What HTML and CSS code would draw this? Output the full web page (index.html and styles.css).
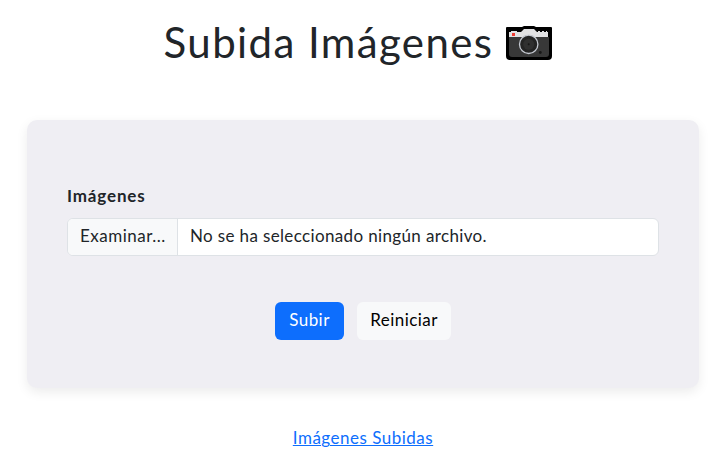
FILE: index.html
```html
<!DOCTYPE html>
<html lang="es">
<head>
<meta charset="utf-8">
<title>Subida Imágenes</title>
<link rel="stylesheet" href="styles.css">
</head>
<body>
<main class="page">
  <h1 class="title"><span class="title-text">Subida Imágenes</span>
    <svg class="camera" viewBox="0 0 46 34" aria-hidden="true">
      <path fill="#000" d="M1 1h15l2-1h10l2 1h15q1 0 1 1v28q0 4-4 4H4q-4 0-4-4V2q0-1 1-1z"/>
      <path fill="#383838" d="M3 11h40v17q0 3-3 3H6q-3 0-3-3z"/>
      <path fill="#e1e1e3" d="M3 6h2V5h6v1h4l3-3h10l3 3h1V5h2v1h2V5h2v1h2V5h1v1h1v5H3z"/>
      <path fill="#ed3b32" d="M6 7h3v3H6z"/>
      <circle cx="22.7" cy="18.3" r="9.2" fill="#242424" stroke="#c5c9d1" stroke-width="1.3"/>
      <circle cx="22.7" cy="18.3" r="5.5" fill="#303030"/>
      <circle cx="22.7" cy="18.3" r="1" fill="#171717"/>
      <circle cx="34.3" cy="26.5" r="1.4" fill="#171717"/>
    </svg>
  </h1>
  <form class="card">
    <label class="label">Imágenes</label>
    <div class="file">
      <span class="browse">Examinar...</span>
      <span class="filename">No se ha seleccionado ningún archivo.</span>
    </div>
    <div class="actions">
      <button class="btn primary" type="button">Subir</button>
      <button class="btn light" type="button">Reiniciar</button>
    </div>
  </form>
  <a class="link" href="#">Imágenes Subidas</a>
</main>
</body>
</html>
```
FILE: styles.css
```css
* { box-sizing: border-box; }
body {
  margin: 0;
  background: #fff;
  color: #212529;
  font: 400 17px/24px Lato, "Open Sans", sans-serif;
}
.page {
  display: flex;
  flex-direction: column;
  align-items: center;
  padding: 18px 28px 0 27px;
}
.title {
  display: flex;
  align-items: flex-start;
  gap: 13px;
  height: 48px;
  margin: 0 0 54px;
  padding-right: 10px;
  font-size: 42px;
  font-weight: 400;
  line-height: 49px;
  white-space: nowrap;
}
.title-text { letter-spacing: 1.4px; }
.camera { width: 46px; height: 34px; margin-top: 8px; }
.card {
  display: flex;
  flex-direction: column;
  align-self: stretch;
  height: 268px;
  padding: 64px 40px 0;
  border-radius: 10px;
  background: #efeef3;
  box-shadow: 0 4px 12px rgba(0, 0, 0, .08);
}
.label { margin-bottom: 10px; font-weight: 700; letter-spacing: .85px; }
.file {
  display: flex;
  height: 38px;
  border: 1px solid #dee2e6;
  border-radius: 6px;
  background: #fff;
  line-height: 34px;
  white-space: nowrap;
  overflow: hidden;
}
.browse {
  width: 110px;
  padding-left: 12px;
  border-right: 1px solid #dee2e6;
  background: #f8f9fa;
  letter-spacing: .5px;
}
.filename { padding-left: 12px; letter-spacing: .36px; }
.actions { display: flex; justify-content: center; gap: 13px; margin-top: 46px; }
.btn {
  height: 38px;
  padding: 0 0 3px;
  border: 0;
  border-radius: 6px;
  font: inherit;
  letter-spacing: .45px;
}
.primary { width: 69px; background: #0d6efd; color: #fff; }
.light { width: 94px; background: #f8f9fa; color: #000; }
.link {
  margin-top: 38px;
  color: #0d6efd;
  letter-spacing: .5px;
  text-decoration: underline;
  text-decoration-thickness: 1px;
  text-underline-offset: 1px;
}
```
